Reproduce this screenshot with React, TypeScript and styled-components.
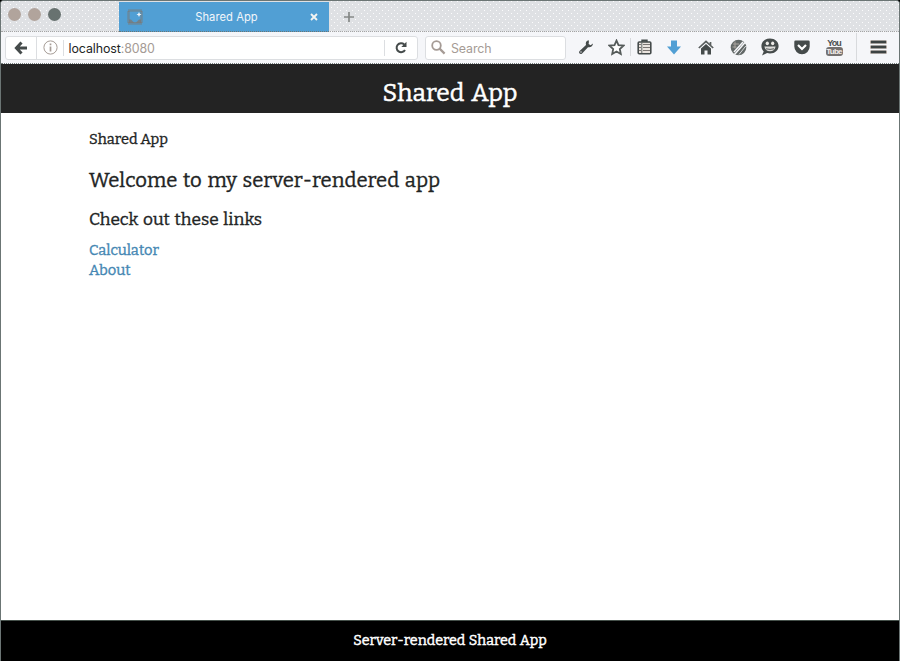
import React from "react";
import styled, { createGlobalStyle } from "styled-components";

const Global = createGlobalStyle`
  * { box-sizing: border-box; }
  html, body { margin: 0; padding: 0; background: #000; }
  svg { display: block; flex: none; }
`;

const serif = `"Bitter", "DejaVu Serif Condensed", "DejaVu Serif", serif`;
const sans = `"Inter", "Liberation Sans", sans-serif`;
const dots = `radial-gradient(circle at 0.5px 0.5px, #fcfcfd 0 0.6px, transparent 0.61px)`;

const Window = styled.div`
  width: 900px;
  height: 661px;
  display: flex;
  flex-direction: column;
  overflow: hidden;
  border: 1px solid #6b7574;
  border-bottom: 0;
  border-top-left-radius: 4px;
  border-top-right-radius: 4px;
  background: #fff;
`;

const TitleBar = styled.div`
  height: 31px;
  flex: none;
  display: flex;
  align-items: stretch;
  border-bottom: 1px dotted #a5a5a5;
  background-color: #dfe1e4;
  background-image: ${dots}, ${dots};
  background-size: 6px 6px;
  background-position: 0 0, 3px 3px;
`;

const Lights = styled.div`
  width: 118px;
  display: flex;
  gap: 7px;
  padding: 7px 0 0 7px;
`;

const Light = styled.span<{ $color: string }>`
  width: 13px;
  height: 13px;
  border-radius: 50%;
  background: ${(p) => p.$color};
`;

const Tab = styled.div`
  width: 210px;
  height: 31px;
  display: flex;
  align-items: center;
  padding: 1px 11px 0 8px;
  background: #519fd4;
  border-top: 1px solid #dfe1e4;
  border-bottom: 1px dotted #6b7574;
  color: #f2f6fa;
  font: 11.2px/16px ${sans};
`;

const TabTitle = styled.span`
  flex: 1;
  text-align: center;
  letter-spacing: 0.05px;
`;

const NewTab = styled.div`
  padding: 10px 0 0 14px;
`;

const Toolbar = styled.div`
  height: 32px;
  flex: none;
  display: flex;
  align-items: center;
  padding-left: 4px;
  background: #f5f6f9;
  border-bottom: 1px dotted #77807f;
`;

const Field = styled.div<{ $width: number; $gap?: number }>`
  width: ${(p) => p.$width}px;
  height: 24px;
  flex: none;
  display: flex;
  align-items: center;
  margin-left: ${(p) => p.$gap ?? 0}px;
  border: 1px solid #dcdee1;
  border-radius: 3px;
  background: #fff;
  font: 12.4px/18px ${sans};
  color: #a59b95;
`;

const FieldCell = styled.div<{ $width: number; $line?: "full" | "short" }>`
  width: ${(p) => p.$width}px;
  height: ${(p) => (p.$line === "short" ? 16 : 22)}px;
  flex: none;
  display: flex;
  align-items: center;
  justify-content: center;
  border-right: ${(p) => (p.$line ? "1px solid #dcdee1" : "0")};
`;

const Address = styled.div`
  flex: 1;
  padding: 2px 0 0 4.5px;
  letter-spacing: -0.08px;
  white-space: nowrap;
`;

const Host = styled.span`
  color: #222424;
`;

const SearchText = styled.span`
  padding-top: 2px;
  letter-spacing: -0.1px;
`;

const Tools = styled.div`
  flex: 1;
  height: 30px;
  display: grid;
  grid-template-columns: 32px 28px 1px 26px 34px 30px 34px 30px 34px 30px 7px 1px 1fr;
  align-items: center;
  justify-items: center;
  padding: 0 0 1px 4px;
`;

const Rule = styled.i<{ $height: number }>`
  width: 1px;
  height: ${(p) => p.$height}px;
  background: #d8dadd;
`;

const Blank = styled.i``;

const Header = styled.header`
  height: 49px;
  flex: none;
  margin: 0 -1px;
  padding-top: 12px;
  background: #232323;
  color: #fff;
  text-align: center;
  font: 24.6px/34px ${serif};
  word-spacing: 2px;
  -webkit-text-stroke: 0.5px #fff;
`;

const Main = styled.main`
  flex: 1;
  padding: 16px 0 0 88px;
  color: #222424;
  font: 14.6px/20px ${serif};
  -webkit-text-stroke: 0.35px currentColor;
`;

const AppName = styled.div`
  height: 20px;
`;

const Heading = styled.h2`
  margin: 17px 0 0;
  font: 20.3px/28px ${serif};
  word-spacing: 1.6px;
  white-space: nowrap;
`;

const SubHeading = styled.h3`
  margin: 14px 0 0;
  font: 17.3px/24px ${serif};
  word-spacing: 1.3px;
  white-space: nowrap;
`;

const Links = styled.nav`
  margin-top: 8px;
  display: flex;
  flex-direction: column;
  align-items: flex-start;
  font-size: 14.7px;
`;

const PageLink = styled.a`
  color: #4587b3;
  text-decoration: none;
`;

const Footer = styled.footer`
  height: 41px;
  flex: none;
  margin: 0 -1px;
  padding-top: 10px;
  border-top: 1px solid #45504a;
  background: #000;
  color: #fff;
  text-align: center;
  font: 14.3px/20px ${serif};
  word-spacing: 0.6px;
  -webkit-text-stroke: 0.45px #fff;
`;

const ink = "#454b4b";

const Favicon = () => (
  <svg width="16" height="16" viewBox="0 0 16 16">
    <rect x="1.5" y="1.5" width="13" height="13" fill="none" stroke="#7c7773" strokeWidth="2.5" strokeDasharray="1 1" />
    <path d="M2 10.5h2l3 3h2l3-3h2V14H2z" fill="#7c7773" opacity=".75" />
    <path d="M12 3l.8 1.7 1.7.8-1.7.8L12 8l-.8-1.7-1.7-.8 1.7-.8z" fill="#eef4f8" />
  </svg>
);

const CloseIcon = () => (
  <svg width="8" height="8" viewBox="0 0 8 8">
    <path d="M1 1l6 6M7 1L1 7" stroke="#f4f4f2" strokeWidth="1.9" />
  </svg>
);

const PlusIcon = () => (
  <svg width="12" height="12" viewBox="0 0 12 12">
    <path d="M6 1v10M1 6h10" stroke="#858886" strokeWidth="1.7" />
  </svg>
);

const BackIcon = () => (
  <svg width="14" height="14" viewBox="0 0 14 14">
    <path d="M7.5 1.5L2.4 7l5.1 5.5M3 7h10" fill="none" stroke={ink} strokeWidth="3" />
  </svg>
);

const InfoIcon = () => (
  <svg width="15" height="15" viewBox="0 0 15 15">
    <circle cx="7.5" cy="7.5" r="6.6" fill="#fff" stroke="#a59b95" />
    <path d="M7.5 6.5v5M7.5 3.6v1.6" stroke="#a59b95" strokeWidth="1.7" />
  </svg>
);

const ReloadIcon = () => (
  <svg width="13" height="13" viewBox="0 0 13 13">
    <path d="M10 9A4.5 4.500 0 1 1 9.200 3.400" fill="none" stroke={ink} strokeWidth="2" />
    <path d="M11.500 .8V6H6.300z" fill={ink} />
  </svg>
);

const SearchIcon = () => (
  <svg width="15" height="15" viewBox="0 0 15 15">
    <circle cx="5.5" cy="5.5" r="4.3" fill="none" stroke="#a59b95" strokeWidth="1.8" />
    <path d="M8.6 8.6l5 5" stroke="#a59b95" strokeWidth="2.2" />
  </svg>
);

const WrenchIcon = () => (
  <svg width="16" height="16" viewBox="0 0 16 16">
    <path d="M10.8 1.2C8.4 1.5 7.2 3.6 8 6L1.6 12.1c-.8.8-.6 1.8 0 2.4s1.7.7 2.5-.1L10 8.2c2.4.7 4.9-.8 5-3.6l-2.4 1.7-2-1.2.3-1.9z" fill={ink} />
    <circle cx="3" cy="13" r=".7" fill="#f5f6f9" />
  </svg>
);

const StarIcon = () => (
  <svg width="17" height="17" viewBox="0 0 17 17">
    <path d="M8.5 1.6l2 4.5 5 .5-3.7 3.4 1 5-4.3-2.5L4.2 15l1-5-3.7-3.4 5-.5z" fill="#fff" stroke="#555b5a" strokeWidth="1.8" />
  </svg>
);

const ClipboardIcon = () => (
  <svg width="15" height="16" viewBox="0 0 15 16">
    <path d="M5 3V1.2h5V3" fill="#777" stroke={ink} strokeWidth="1.4" />
    <rect x="1.2" y="3" width="12.6" height="11.8" rx="1" fill="#eae4df" stroke={ink} strokeWidth="1.6" />
    <path d="M4.8 3v11" stroke="#666b6a" strokeWidth="1" />
    <path d="M6 5.500H13M6 8.500H13M6 11.500H13M2 5.500H4M2 8.500H4M2 11.500H4" stroke="#7b7673" />
  </svg>
);

const DownloadIcon = () => (
  <svg width="14" height="15" viewBox="0 0 14 15">
    <path d="M4 .5h6v6h4L7 14.5 0 6.5h4z" fill="#519fd4" />
  </svg>
);

const HomeIcon = () => (
  <svg width="16" height="15" viewBox="0 0 16 15">
    <path d="M.8 8L8 1.3 15.2 8M12.5 2v4" fill="none" stroke="#5a5f5e" strokeWidth="1.7" />
    <path d="M3 8.500L8 3.900l5 4.600v6H9.5v-4h-3v4H3z" fill={ink} />
  </svg>
);

const CompassIcon = () => (
  <svg width="17" height="17" viewBox="0 0 17 17">
    <circle cx="8.5" cy="8.5" r="7.8" fill="#626867" />
    <path d="M3 5h6M2.5 8h4M5 2.5v7" stroke="#aaa49f" strokeWidth="1" />
    <path d="M15 3.5L4.5 15.5M13 3L4 13" stroke="#f5f6f9" strokeWidth="1.5" />
    <path d="M15.8 7L9 15.5" stroke="#f5f6f9" strokeWidth="0.8" />
  </svg>
);

const SmileyIcon = () => (
  <svg width="18" height="18" viewBox="0 0 18 18">
    <path d="M9 .5c5 0 8.6 3.200 8.6 7.500S14 15.500 9 15.500c-1 0-2-.1-2.900-.4L1 17.500l1.700-4C1.300 12 .4 10.200 .4 8 .4 3.700 4 .5 9 .5z" fill={ink} />
    <ellipse cx="6.3" cy="5.3" rx="1.6" ry="1.9" fill="#eceae7" />
    <ellipse cx="11.7" cy="5.3" rx="1.6" ry="1.9" fill="#eceae7" />
    <path d="M3.4 8.6h11.2c-.5 3.200-2.400 4.700-5.600 4.700s-5.100-1.500-5.600-4.700z" fill="#dedddb" />
    <path d="M5 10.8q4 1.200 8 0" fill="none" stroke={ink} strokeWidth=".9" />
  </svg>
);

const PocketIcon = () => (
  <svg width="16" height="15" viewBox="0 0 16 15">
    <path d="M1.5 .5h13q1.2 0 1.2 1.2V6.5A7.7 7.7 0 0 1 .3 6.5V1.7Q.3 .5 1.5 .5z" fill={ink} />
    <path d="M4 5l4 4 4-4" fill="none" stroke="#fff" strokeWidth="2.2" />
  </svg>
);

const TubeLabel = styled.div`
  width: 17px;
  display: flex;
  flex-direction: column;
  align-items: center;
  color: #4b4e4d;
  font: bold 9px/8px "Liberation Sans", sans-serif;
  letter-spacing: -1px;
`;

const TubeBox = styled.span`
  width: 17px;
  height: 9px;
  border-radius: 3px;
  background: #747170;
  color: #f4eeea;
  font-size: 8px;
  line-height: 9px;
  letter-spacing: -0.7px;
  text-align: center;
`;

const MenuIcon = () => (
  <svg width="17" height="14" viewBox="0 0 17 14">
    <path d="M1.5 2h14M1.5 7h14M1.5 12h14" stroke="#b5aaa3" strokeWidth="3.6" strokeLinecap="round" />
    <path d="M1 2h15M1 7h15M1 12h15" stroke="#3d4343" strokeWidth="2.4" />
  </svg>
);

export default function App() {
  return (
    <>
      <Global />
      <Window>
        <TitleBar>
          <Lights>
            <Light $color="#b1a49c" />
            <Light $color="#b1a49c" />
            <Light $color="#687270" />
          </Lights>
          <Tab>
            <Favicon />
            <TabTitle>Shared App</TabTitle>
            <CloseIcon />
          </Tab>
          <NewTab><PlusIcon /></NewTab>
        </TitleBar>
        <Toolbar>
          <Field $width={413}>
            <FieldCell $width={31} $line="full"><BackIcon /></FieldCell>
            <FieldCell $width={27} $line="short"><InfoIcon /></FieldCell>
            <Address><Host>localhost</Host>:8080</Address>
            <FieldCell $width={1} $line="short" />
            <FieldCell $width={32}><ReloadIcon /></FieldCell>
          </Field>
          <Field $width={141} $gap={7}>
            <FieldCell $width={25}><SearchIcon /></FieldCell>
            <SearchText>Search</SearchText>
          </Field>
          <Tools>
            <WrenchIcon />
            <StarIcon />
            <Rule $height={18} />
            <ClipboardIcon />
            <DownloadIcon />
            <HomeIcon />
            <CompassIcon />
            <SmileyIcon />
            <PocketIcon />
            <TubeLabel>You<TubeBox>Tube</TubeBox></TubeLabel>
            <Blank />
            <Rule $height={28} />
            <MenuIcon />
          </Tools>
        </Toolbar>
        <Header>Shared App</Header>
        <Main>
          <AppName>Shared App</AppName>
          <Heading>Welcome to my server-rendered app</Heading>
          <SubHeading>Check out these links</SubHeading>
          <Links>
            <PageLink>Calculator</PageLink>
            <PageLink>About</PageLink>
          </Links>
        </Main>
        <Footer>Server-rendered Shared App</Footer>
      </Window>
    </>
  );
}
